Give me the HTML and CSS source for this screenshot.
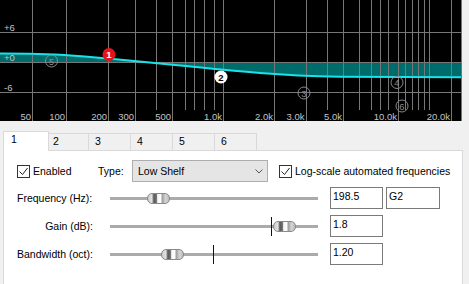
FILE: index.html
```html
<!DOCTYPE html>
<html lang="en">
<head>
    <meta charset="UTF-8">
    <title>EQ band editor</title>
    <link rel="stylesheet" href="styles.css">
</head>
<body>

<!-- Frequenzgang -->
<div class="graph">
    <svg width="462" height="121" viewBox="0 0 462 121">
        <path class="fill" d="M0,53.5 L30,53.8 C60,54.2 80,56 108,58.5 C130,60.5 150,62.5 175,65 C200,67.5 230,70.5 260,73 C285,75 310,76.2 340,76.8 L461,77.3 L461,62.5 L0,62.5 Z"/>
        <g class="grid">
            <path d="M0,32.5H462 M0,62.5H462 M0,92.5H462"/>
            <path d="M32.5,0V121 M66.5,0V121 M108.5,0V121 M135.5,0V121 M172.5,0V121 M223.5,0V121 M274.5,0V121 M306.5,0V121 M343.5,0V121 M398.5,0V121 M451.5,0V121 M461.5,0V121"/>
            <path d="M156.5,0V110 M185.5,0V110 M194.5,0V110 M204.5,0V110 M214.5,0V110 M327.5,0V110 M359.5,0V110 M371.5,0V110 M380.5,0V110 M388.5,0V110 M405.5,0V110 M412.5,0V110 M418.5,0V110 M424.5,0V110 M429.5,0V110"/>
        </g>
        <path class="curve" d="M0,53.5 L30,53.8 C60,54.2 80,56 108,58.5 C130,60.5 150,62.5 175,65 C200,67.5 230,70.5 260,73 C285,75 310,76.2 340,76.8 L461,77.3"/>
        <g class="axis">
            <text x="4" y="30.5">+6</text>
            <text x="4" y="60.5">+0</text>
            <text x="4" y="90.5">-6</text>
            <g class="freq">
                <text x="31" y="120">50</text>
                <text x="65" y="120">100</text>
                <text x="107" y="120">200</text>
                <text x="134" y="120">300</text>
                <text x="171" y="120">500</text>
                <text x="222" y="120">1.0k</text>
                <text x="273" y="120">2.0k</text>
                <text x="304.5" y="120">3.0k</text>
                <text x="342" y="120">5.0k</text>
                <text x="397" y="120">10.0k</text>
                <text x="450" y="120">20.0k</text>
            </g>
        </g>
        <g class="marker off">
            <circle cx="51.5" cy="61" r="6"/><text x="51.5" y="64.5">5</text>
        </g>
        <g class="marker off">
            <circle cx="304" cy="93" r="6"/><text x="304" y="96.5">3</text>
        </g>
        <g class="marker off">
            <circle cx="397" cy="82.5" r="6"/><text x="397" y="86">4</text>
        </g>
        <g class="marker off">
            <circle cx="402" cy="106" r="6"/><text x="402" y="109.5">6</text>
        </g>
        <g class="marker selected">
            <circle cx="109" cy="54.5" r="6.5"/><text x="109" y="58">1</text>
        </g>
        <g class="marker on">
            <circle cx="221" cy="77" r="6.5"/><text x="221" y="80.5">2</text>
        </g>
    </svg>
</div>

<div class="editor">
    <div class="tabs">
        <div class="tab active">1</div>
        <div class="tab">2</div>
        <div class="tab">3</div>
        <div class="tab">4</div>
        <div class="tab">5</div>
        <div class="tab">6</div>
        <div class="tab-fill"></div>
    </div>

    <div class="panel">
        <div class="top-row">
            <div class="check enabled">
                <span class="box"><svg width="11" height="11"><polyline points="1.5,5.5 4.5,8.5 9.5,2"/></svg></span>
                <span>Enabled</span>
            </div>
            <span class="type-label">Type:</span>
            <div class="select">
                <span>Low Shelf</span>
                <svg width="8" height="5"><polyline points="0.5,0.5 4,4 7.5,0.5"/></svg>
            </div>
            <div class="check log">
                <span class="box"><svg width="11" height="11"><polyline points="1.5,5.5 4.5,8.5 9.5,2"/></svg></span>
                <span>Log-scale automated frequencies</span>
            </div>
        </div>

        <div class="param">
            <span class="param-label">Frequency (Hz):</span>
            <div class="slider">
                <span class="thumb" style="left: 37px"></span>
            </div>
            <span class="textbox">198.5</span>
            <span class="textbox note">G2</span>
        </div>

        <div class="param">
            <span class="param-label right">Gain (dB):</span>
            <div class="slider">
                <span class="tick" style="left: 161px"></span>
                <span class="thumb" style="left: 163px"></span>
            </div>
            <span class="textbox">1.8</span>
        </div>

        <div class="param">
            <span class="param-label">Bandwidth (oct):</span>
            <div class="slider">
                <span class="tick" style="left: 103px"></span>
                <span class="thumb" style="left: 51px"></span>
            </div>
            <span class="textbox">1.20</span>
        </div>
    </div>
</div>

</body>
</html>
```

FILE: styles.css
```css
body {
    margin: 0;
    background-color: #f0f0f0;
    font-family: "Liberation Sans", Arial, sans-serif;
    font-size: 10.5px;
    line-height: 13px;
    color: #000;
}

/* Grafik oben */
.graph {
    width: 462px;
    height: 121px;
    background-color: #000;
}

.graph svg {
    display: block;
}

.fill {
    fill: #006b6b;
}

.grid path {
    stroke: #777;
    stroke-width: 1;
    fill: none;
}

.curve {
    stroke: #19e3e8;
    stroke-width: 2;
    fill: none;
}

.axis text {
    fill: #c4c4c4;
    font-size: 9.5px;
}

.axis .freq text {
    text-anchor: end;
}

.marker text {
    font-size: 9.5px;
    font-weight: bold;
    text-anchor: middle;
}

.marker.selected circle {
    fill: #e3141c;
}

.marker.selected text {
    fill: #fff;
}

.marker.on circle {
    fill: #fff;
}

.marker.on text {
    fill: #000;
}

.marker.off circle {
    fill: none;
    stroke: #8a8a8a;
}

.marker.off text {
    fill: #8a8a8a;
    font-weight: normal;
}

/* Tabs */
.editor {
    width: 460px;
    margin: 10px 0 0 3px;
}

.tabs {
    display: flex;
    align-items: flex-end;
    height: 20px;
}

.tab {
    box-sizing: border-box;
    width: 42px;
    height: 18px;
    padding: 1px 0 0 6px;
    border: 1px solid #d9d9d9;
    border-left: none;
    background-color: #f0f0f0;
}

.tab.active {
    width: 46px;
    height: 20px;
    padding-left: 7px;
    border-left: 1px solid #d9d9d9;
    border-bottom: none;
    background-color: #fff;
}

.tab.active + .tab {
    width: 40px;
    padding-left: 4px;
}

.tab-fill {
    flex: 1;
    border-bottom: 1px solid #d9d9d9;
}

.panel {
    box-sizing: border-box;
    height: 133px;
    padding: 9px 0 0 13px;
    background-color: #fff;
    border-left: 1px solid #d9d9d9;
    border-right: 1px solid #d9d9d9;
}

/* erste Zeile */
.top-row {
    display: flex;
    align-items: center;
    height: 22px;
}

.check {
    display: flex;
    align-items: center;
    gap: 3px;
}

.check.enabled {
    width: 81px;
}

.check.log {
    margin-left: 11px;
}

.box {
    box-sizing: border-box;
    width: 13px;
    height: 13px;
    border: 1px solid #333;
    background-color: #fff;
}

.box svg {
    display: block;
}

.box polyline {
    fill: none;
    stroke: #222;
    stroke-width: 1;
}

.type-label {
    width: 34px;
}

.select {
    box-sizing: border-box;
    width: 136px;
    height: 22px;
    display: flex;
    align-items: center;
    justify-content: space-between;
    padding: 0 4px 0 5px;
    border: 1px solid #adadad;
    background-color: #e5e5e5;
}

.select polyline {
    fill: none;
    stroke: #555;
    stroke-width: 1;
}

/* Parameterzeilen */
.param {
    display: flex;
    align-items: center;
    height: 22px;
    margin-top: 6px;
}

.top-row + .param {
    margin-top: 5px;
}

.param-label {
    width: 76px;
}

.param-label.right {
    text-align: right;
}

.slider {
    position: relative;
    width: 208px;
    height: 22px;
    margin-left: 17px;
    background: linear-gradient(#aaa, #aaa) 0 10px / 100% 3px no-repeat;
}

.tick {
    position: absolute;
    top: 2px;
    width: 1px;
    height: 19px;
    background-color: #111;
}

.thumb {
    position: absolute;
    top: 6px;
    box-sizing: border-box;
    width: 23px;
    height: 11px;
    border: 1px solid #8a8a8a;
    border-radius: 5px;
    background: linear-gradient(to right, #c8c8c8 0%, #e4e4e4 18%, #5a5a5a 28%, #6e6e6e 40%, #f6f6f6 46%, #ffffff 60%, #a0a0a0 68%, #d6d6d6 84%, #b8b8b8 100%);
}

.textbox {
    box-sizing: border-box;
    width: 53px;
    height: 22px;
    margin-left: 12px;
    padding: 2px 0 0 2px;
    border: 1px solid #7a7a7a;
    background-color: #fff;
}

.textbox.note {
    width: 54px;
    margin-left: 3px;
}
```
